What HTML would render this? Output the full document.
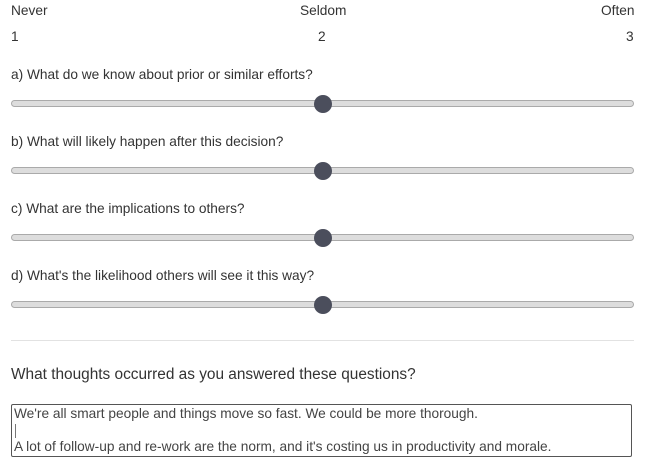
<!DOCTYPE html>
<html><head><style>
body{margin:0;width:650px;height:466px;background:#fff;font-family:"Liberation Sans",sans-serif;color:#333;position:relative;overflow:hidden}
.t{position:absolute;font-size:13.7px;line-height:16px;white-space:nowrap}
.track{position:absolute;left:11px;width:621px;height:5px;border:1px solid #aaa;border-radius:4px;background:#ddd}
.thumb{position:absolute;left:314px;width:18px;height:18px;border-radius:50%;background:#4b4e5c}
</style></head><body>
<div class="t" style="left:11px;top:3px">Never</div>
<div class="t" style="left:300px;top:3px">Seldom</div>
<div class="t" style="left:601px;top:3px">Often</div>
<div class="t" style="left:11px;top:29px">1</div>
<div class="t" style="left:318px;top:29px">2</div>
<div class="t" style="left:626px;top:29px">3</div>

<div class="t" style="left:11px;top:67px">a) What do we know about prior or similar efforts?</div>
<div class="track" style="top:100px"></div><div class="thumb" style="top:95px"></div>
<div class="t" style="left:11px;top:134px">b) What will likely happen after this decision?</div>
<div class="track" style="top:167px"></div><div class="thumb" style="top:162px"></div>
<div class="t" style="left:11px;top:201px">c) What are the implications to others?</div>
<div class="track" style="top:234px"></div><div class="thumb" style="top:229px"></div>
<div class="t" style="left:11px;top:268px">d) What's the likelihood others will see it this way?</div>
<div class="track" style="top:301px"></div><div class="thumb" style="top:296px"></div>

<div style="position:absolute;left:11px;top:340px;width:623px;height:1px;background:#e2e2e2"></div>
<div class="t" style="left:11px;top:365px;font-size:15.4px;line-height:19px">What thoughts occurred as you answered these questions?</div>
<div style="position:absolute;left:11px;top:404px;width:619px;height:51px;border:1px solid #555;border-radius:2px"></div>
<div class="t" style="left:14px;top:406px;color:#444">We're all smart people and things move so fast. We could be more thorough.</div>
<div style="position:absolute;left:15px;top:424px;width:1px;height:14px;background:#777"></div>
<div class="t" style="left:14px;top:439px;color:#444">A lot of follow-up and re-work are the norm, and it's costing us in productivity and morale.</div>
</body></html>
